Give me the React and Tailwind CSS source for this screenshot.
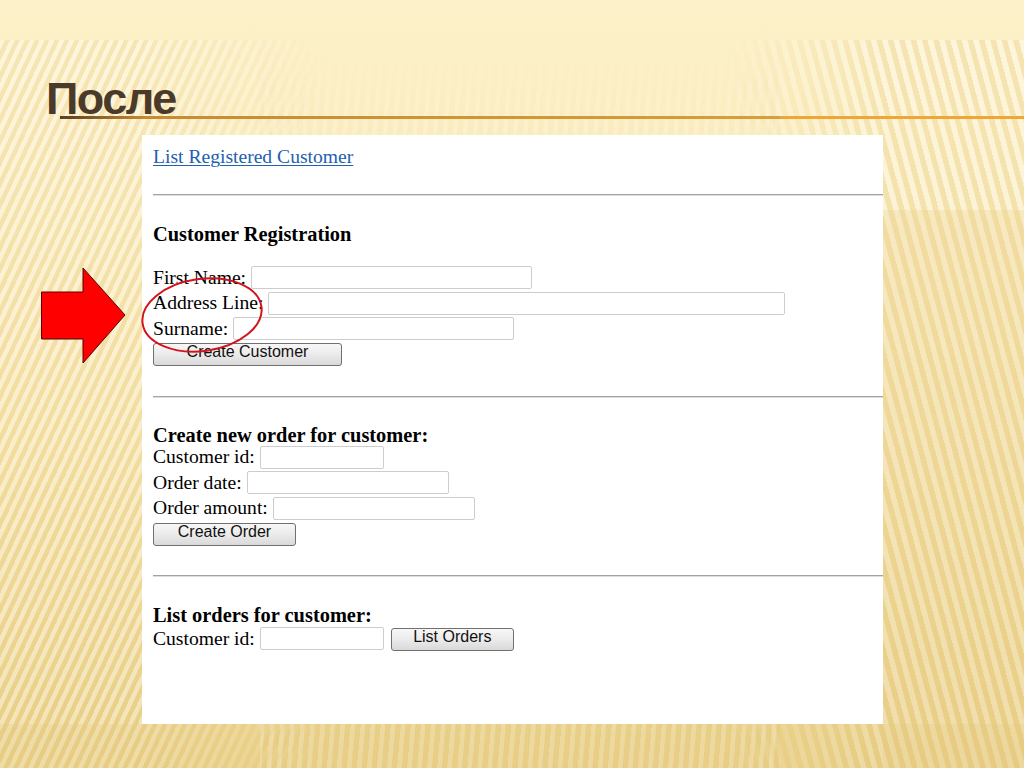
import React from "react";

const serif = "font-['Liberation_Serif',serif]";
const sans = "font-['Liberation_Sans',Arial,sans-serif]";

const Field = ({ label, width }) => (
  <div className="flex items-center h-[25.5px]">
    <span className="text-[19.6px] leading-none text-black">{label}</span>
    <input
      type="text"
      className={`ml-[5px] h-[23px] ${width} border border-[#cdcdcd] rounded-[2px] bg-white`}
    />
  </div>
);

const Button = ({ children, width }) => (
  <button
    type="button"
    className={`${sans} ${width} h-[23px] border border-[#707070] rounded-[3px] bg-[linear-gradient(180deg,#f7f7f7_0%,#ebebeb_50%,#d9d9d9_100%)] text-[16px] leading-[16px] text-[#111] pb-[5px]`}
  >
    {children}
  </button>
);

const Rule = () => (
  <div className="h-[2px] border-t border-[#a3a3a3] border-b border-b-[#dedede]" />
);

const Heading = ({ children }) => (
  <div className="h-[24px] flex items-center text-[20.4px] font-bold text-black">
    {children}
  </div>
);

export default function App() {
  return (
    <div className="relative w-[1024px] h-[768px] overflow-hidden bg-[linear-gradient(180deg,#fdf1c9_0%,#fcefc4_18%,#f8e6b0_55%,#ecd48f_100%)]">
      {/* striped texture */}
      <div className="absolute left-0 top-[40px] w-[330px] h-[728px] bg-[repeating-linear-gradient(115deg,rgba(255,255,255,0.35)_0px,rgba(255,255,255,0.35)_4px,rgba(214,176,84,0.16)_5px,rgba(214,176,84,0.16)_9px)] [mask-image:linear-gradient(90deg,#000_40%,transparent)]" />
      <div className="absolute left-[260px] top-[40px] w-[520px] h-[728px] bg-[repeating-linear-gradient(95deg,rgba(255,255,255,0.25)_0px,rgba(255,255,255,0.25)_4px,rgba(214,176,84,0.1)_5px,rgba(214,176,84,0.1)_10px)] [mask-image:linear-gradient(180deg,transparent_0%,#000_30%)]" />
      <div className="absolute right-0 top-[40px] w-[300px] h-[728px] bg-[repeating-linear-gradient(75deg,rgba(255,255,255,0.35)_0px,rgba(255,255,255,0.35)_5px,rgba(214,176,84,0.18)_6px,rgba(214,176,84,0.18)_11px)] [mask-image:linear-gradient(270deg,#000_45%,transparent)]" />
      <div className="absolute right-0 top-[210px] w-[141px] h-[558px] bg-[#e6cd84]/25" />
      <div className="absolute left-0 bottom-0 w-[1024px] h-[44px] bg-[#e3c87c]/25" />

      {/* title */}
      <div className="relative pt-[76px] pl-[46px] h-[116px]">
        <h1 className={`${sans} text-[45px] leading-[45px] font-bold tracking-[-1.5px] text-[#4b3a29]`}>
          После
        </h1>
      </div>
      <div className="relative flex h-[3px]">
        <div className="ml-[60px] w-[720px] h-[3px] bg-[linear-gradient(90deg,#5a3f22_0%,#c88a34_12%,#d99d3c_100%)]" />
        <div className="w-[244px] h-[3px] bg-[#eea638]" />
      </div>

      {/* form screenshot */}
      <div className={`relative ml-[142px] mt-[16px] w-[741px] h-[589px] bg-white ${serif}`}>
        <div className="pl-[11px] pt-[10px]">
          <div className="h-[24px] flex items-center">
            <a href="#" className="text-[19.6px] text-[#2360b0] underline underline-offset-2 decoration-1">
              List Registered Customer
            </a>
          </div>
        </div>
        <div className="ml-[11px] mt-[25px]">
          <Rule />
        </div>

        <div className="pl-[11px] mt-[26px]">
          <Heading>Customer Registration</Heading>
          <div className="mt-[19px]">
            <Field label="First Name:" width="w-[281px]" />
            <Field label="Address Line:" width="w-[517px]" />
            <Field label="Surname:" width="w-[281px]" />
          </div>
          <div className="-mt-[2px]">
            <Button width="w-[189px]">Create Customer</Button>
          </div>
        </div>
        <div className="ml-[11px] mt-[30px]">
          <Rule />
        </div>

        <div className="pl-[11px] mt-[26px]">
          <Heading>Create new order for customer:</Heading>
          <div className="-mt-[3px]">
            <Field label="Customer id:" width="w-[124px]" />
            <Field label="Order date:" width="w-[202px]" />
            <Field label="Order amount:" width="w-[202px]" />
          </div>
          <div className="-mt-[1px]">
            <Button width="w-[143px]">Create Order</Button>
          </div>
        </div>
        <div className="ml-[11px] mt-[29px]">
          <Rule />
        </div>

        <div className="pl-[11px] mt-[26px]">
          <Heading>List orders for customer:</Heading>
          <div className="flex items-center h-[25.5px] -mt-[1px]">
            <span className="text-[19.6px] leading-none text-black">Customer id:</span>
            <input
              type="text"
              className="ml-[5px] h-[23px] w-[124px] border border-[#cdcdcd] rounded-[2px] bg-white"
            />
            <div className="ml-[7px] -mt-[2px]">
              <Button width="w-[123px]">List Orders</Button>
            </div>
          </div>
        </div>

        {/* red ellipse annotation */}
        <svg className="absolute left-[-6px] top-[137px] pointer-events-none" width="134" height="86" viewBox="0 0 134 86">
          <ellipse cx="66" cy="43" rx="60" ry="36" fill="none" stroke="#d3141c" strokeWidth="2" transform="rotate(-8 66 43)" />
        </svg>
      </div>

      {/* red arrow */}
      <svg className="absolute left-[38px] top-[265px]" width="92" height="102" viewBox="0 0 92 102">
        <polygon points="3.5,27 45,27 45,3 87,50 45,98 45,74 3.5,74" fill="#ff0000" stroke="#5a0000" strokeWidth="1" />
      </svg>
    </div>
  );
}
